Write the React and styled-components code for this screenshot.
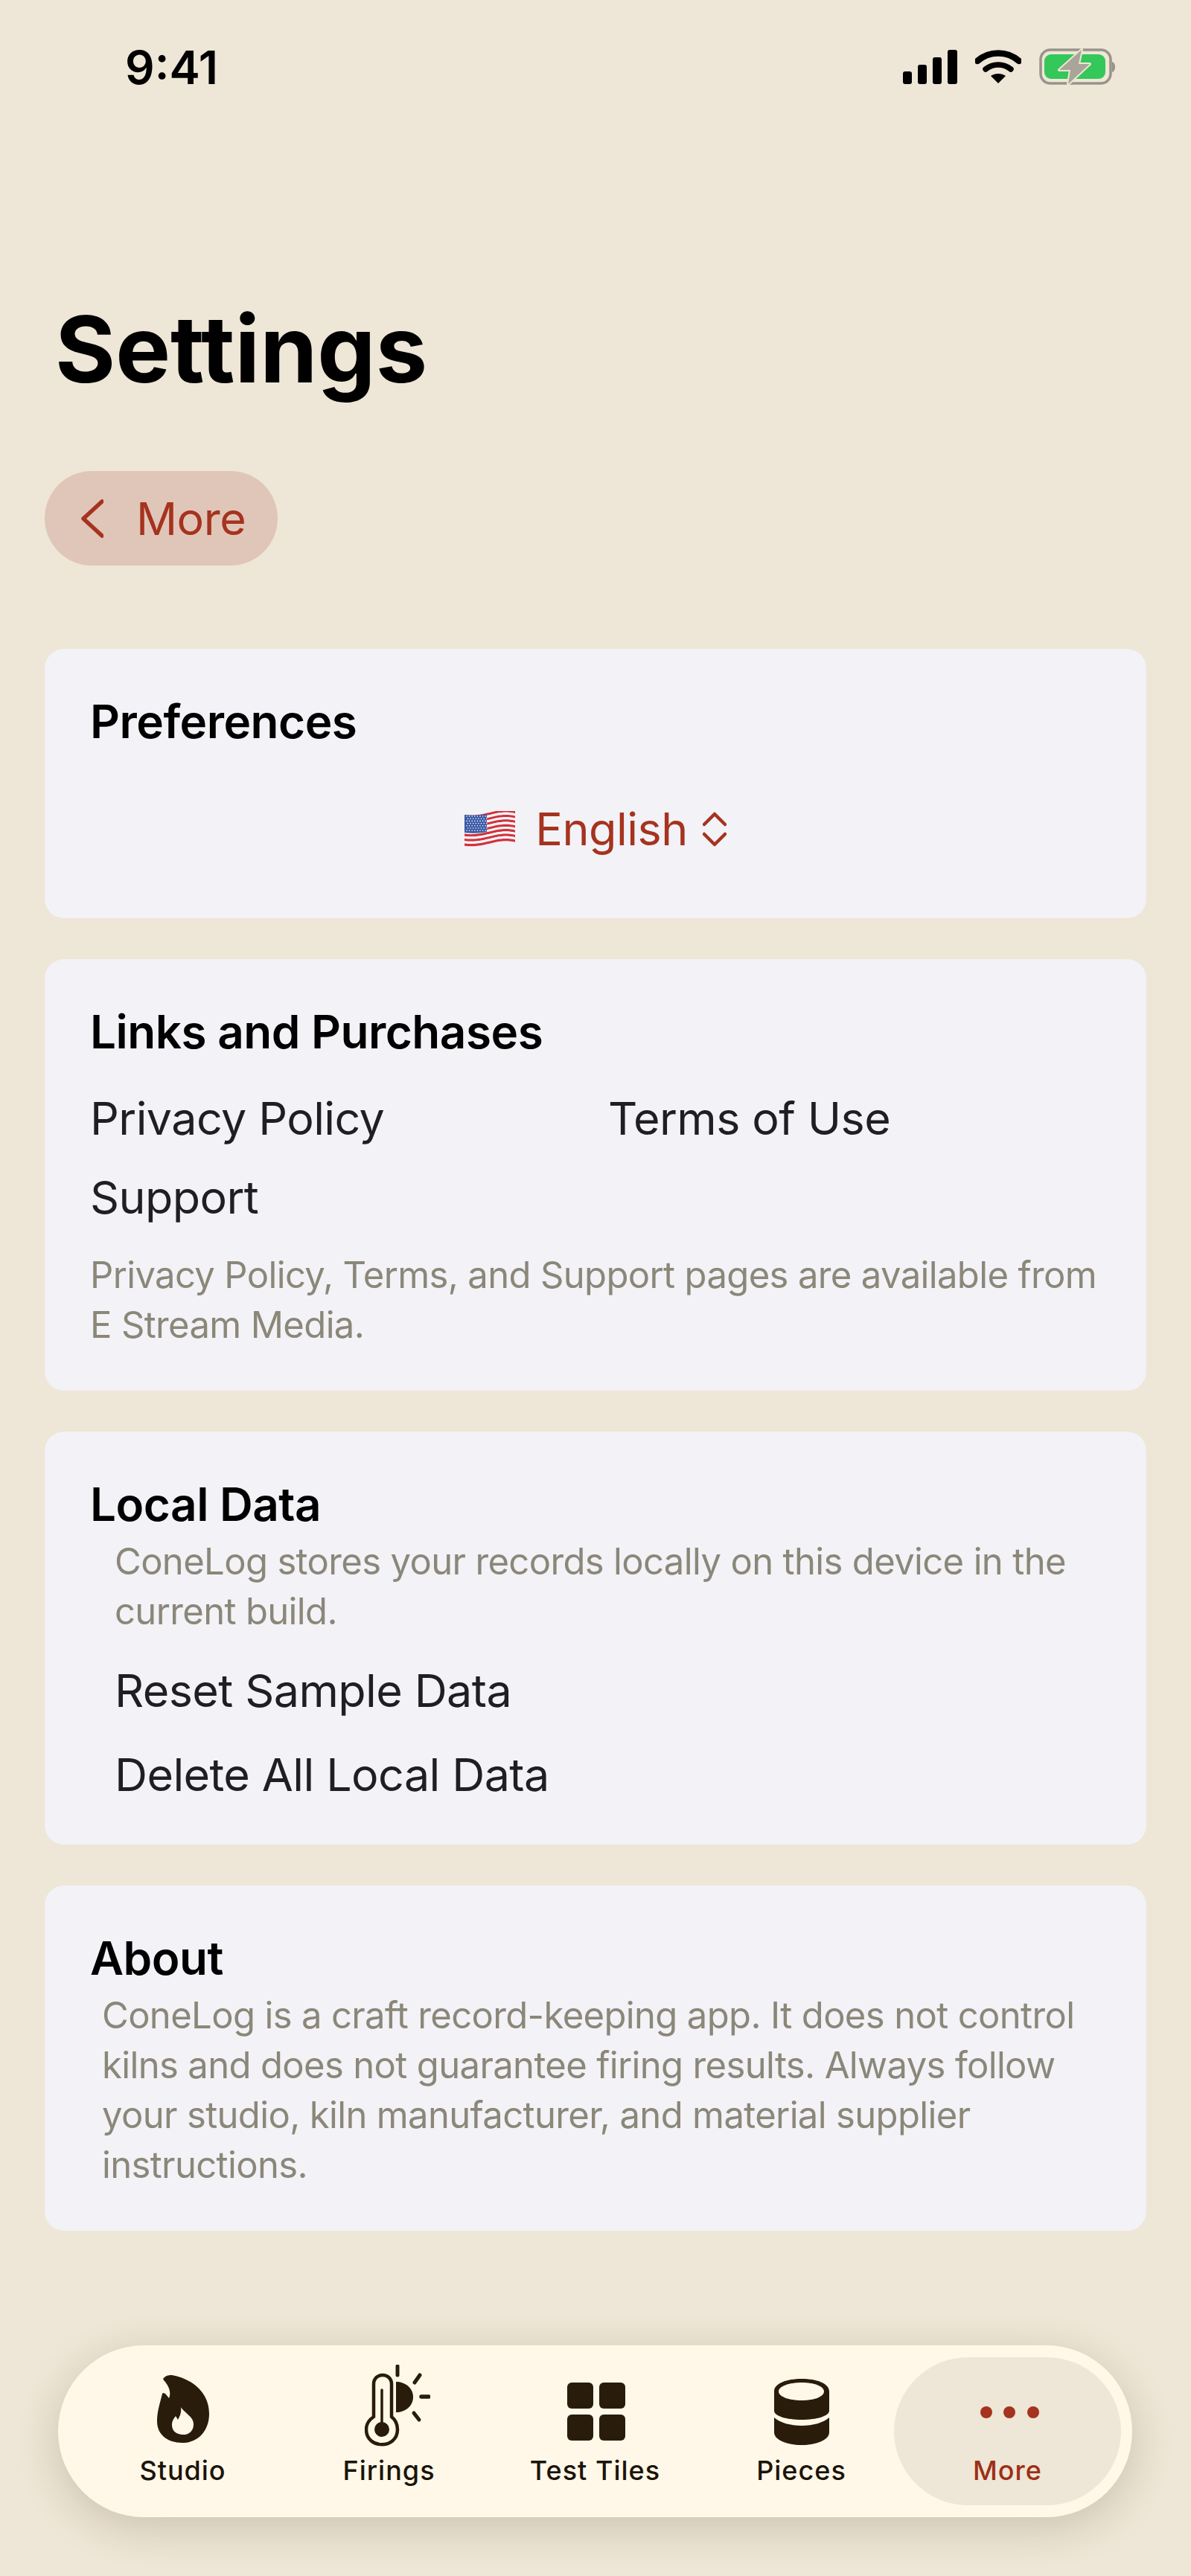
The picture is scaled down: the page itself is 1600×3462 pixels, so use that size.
import React from 'react';
import styled, { createGlobalStyle } from 'styled-components';

const GlobalStyle = createGlobalStyle`
  html, body {
    margin: 0;
    padding: 0;
    background: #eee6d6;
  }
  * {
    box-sizing: border-box;
  }
`;

const Page = styled.div`
  width: 1600px;
  height: 3462px;
  padding: 60px 60px 79px;
  display: flex;
  flex-direction: column;
  background: #eee6d6;
  font-family: Inter, "Liberation Sans", sans-serif;
  overflow: hidden;

  & > * {
    flex: none;
  }
`;

const StatusBar = styled.div`
  display: flex;
  align-items: center;
  justify-content: space-between;
  height: 62px;
  padding: 0 42px 0 108px;
`;

const Time = styled.span`
  font-size: 62px;
  line-height: 62px;
  font-weight: 600;
  color: #000;
`;

const StatusIcons = styled.div`
  display: flex;
  align-items: center;
  gap: 24px;
  margin-top: -2px;
`;

const Title = styled.h1`
  margin: 277px 0 0 14px;
  font-size: 124px;
  line-height: 140px;
  font-weight: 700;
  color: #000;
`;

const BackButton = styled.button`
  display: flex;
  align-items: center;
  gap: 44px;
  width: 313px;
  height: 127px;
  margin-top: 94px;
  padding: 0 0 0 49px;
  border: 0;
  border-radius: 64px;
  background: #e0c6b8;
  color: #a5331f;
  font: 400 61px/76px Inter, "Liberation Sans", sans-serif;
  letter-spacing: -0.5px;
`;

const Cards = styled.div`
  display: flex;
  flex-direction: column;
  gap: 55px;
  margin-top: 112px;
`;

const Card = styled.section`
  padding: 62px 61px ${(p) => p.$bottom}px;
  border-radius: 26px;
  background: #f2f2f7;
`;

const Heading = styled.h2`
  margin: 0;
  font-size: 62px;
  line-height: 72px;
  font-weight: 600;
  letter-spacing: -0.5px;
  color: #000;
`;

const LanguageRow = styled.div`
  display: flex;
  align-items: center;
  justify-content: center;
  height: 80px;
  margin-top: 68px;
  color: #a5331f;
  font-size: 61px;
  line-height: 76px;
  letter-spacing: -0.5px;
`;

const LanguageName = styled.span`
  margin: 0 20px 0 27px;
`;

const LinkGrid = styled.div`
  display: grid;
  grid-template-columns: 696px 1fr;
  row-gap: 30px;
  margin-top: 42px;
`;

const LinkText = styled.div`
  font-size: 61px;
  line-height: 76px;
  letter-spacing: -0.6px;
  color: #1f1f21;
`;

const Note = styled.p`
  margin: ${(p) => p.$top}px 0 0 ${(p) => p.$indent || 0}px;
  font-size: 49px;
  line-height: 67px;
  letter-spacing: -0.65px;
  white-space: nowrap;
  color: #8b8779;
`;

const ActionList = styled.div`
  display: flex;
  flex-direction: column;
  gap: 37px;
  margin: 35px 0 0 33px;
`;

const TabBar = styled.nav`
  display: flex;
  align-items: stretch;
  height: 231px;
  margin: auto 19px 0 18px;
  padding: 16px 16px 16px 29px;
  border-radius: 116px;
  background: #fff8e9;
  box-shadow: 0 14px 56px rgba(70, 55, 25, 0.2);
`;

const Tab = styled.div`
  flex: none;
  display: flex;
  flex-direction: column;
  align-items: center;
  width: ${(p) => (p.$active ? 305 : 277)}px;
  margin-left: ${(p) => (p.$active ? -14 : 0)}px;
  border-radius: 100px;
  background: ${(p) => (p.$active ? '#eee6d6' : 'transparent')};
  color: ${(p) => (p.$active ? '#9d2f16' : '#1c140a')};
`;

const TabIcon = styled.div`
  display: flex;
  align-items: flex-start;
  justify-content: center;
  height: 110px;
  margin: 10px 0 0 ${(p) => p.$left || 0}px;
  padding-top: ${(p) => p.$top}px;

  svg {
    display: block;
  }
`;

const TabLabel = styled.span`
  margin-top: 11px;
  font-size: 36px;
  line-height: 42px;
  font-weight: 500;
  letter-spacing: 1px;
`;

const SignalIcon = () => (
  <svg width="73" height="46" viewBox="0 0 73 46" fill="#000">
    <rect x="0" y="29" width="12" height="17" rx="3" />
    <rect x="20" y="20" width="12" height="26" rx="3" />
    <rect x="40" y="10" width="12" height="36" rx="3" />
    <rect x="60" y="0" width="13" height="46" rx="3" />
  </svg>
);

const WifiIcon = () => (
  <svg width="62" height="46" viewBox="0 0 62 46" fill="none" stroke="#000">
    <path d="M3 15 C19 1 43 1 59 15" strokeWidth="8.5" strokeLinecap="round" />
    <path d="M14 26 C24 18 38 18 48 26" strokeWidth="7.5" strokeLinecap="round" />
    <path d="M31 45 L21 35 C27 31 35 31 41 35 Z" fill="#000" stroke="none" />
  </svg>
);

const BatteryIcon = () => (
  <svg width="102" height="50" viewBox="0 0 102 50">
    <rect x="2" y="2" width="94" height="45" rx="13" fill="none" stroke="#98948a" strokeWidth="3.5" />
    <rect x="7" y="8" width="82" height="33" rx="9" fill="#34c759" />
    <path d="M98 18 C101 19 102 22 102 25 C102 28 101 31 98 32 Z" fill="#98948a" />
    <path
      d="M57 2 L27 29 H42 L39 48 L68 21 H53 Z"
      fill="#a9a598"
      stroke="#eee6d6"
      strokeWidth="4"
      strokeLinejoin="round"
      paintOrder="stroke"
    />
  </svg>
);

const BackChevron = () => (
  <svg width="30" height="52" viewBox="0 0 30 52" fill="none" stroke="#a5331f" strokeWidth="5.5" strokeLinecap="round" strokeLinejoin="round" style={{ flex: 'none' }}>
    <path d="M28 3 L3 26 L28 49" />
  </svg>
);

const UpDownChevron = () => (
  <svg width="32" height="47" viewBox="0 0 32 47" fill="none" stroke="#a5331f" strokeWidth="4.5" strokeLinecap="round" strokeLinejoin="round">
    <path d="M2 17 L16 3 L30 17" />
    <path d="M2 30 L16 44 L30 30" />
  </svg>
);

// waving stripe, y is the height of the stripe at the pole
const stripePath = (y, h) =>
  `M0 ${y + 4} C17 ${y + 6} 28 ${y + 2} 42 ${y - 1} C52 ${y - 3} 60 ${y - 3} 68 ${y - 1} V${y + h - 1} C60 ${y + h - 3} 52 ${y + h - 3} 42 ${y + h - 1} C28 ${y + h + 2} 17 ${y + h + 6} 0 ${y + h + 4} Z`;

const FlagIcon = () => {
  const stripes = Array.from({ length: 13 }, (_, i) => i);
  const stars = [];
  for (let row = 0; row < 7; row++) {
    for (let col = 0; col < 8; col++) {
      stars.push(<circle key={`${row}-${col}`} cx={3 + col * 3.6 + (row % 2) * 1.5} cy={7 + row * 3.2} r="0.8" fill="#fff" />);
    }
  }
  return (
    <svg width="68" height="49" viewBox="0 0 68 49">
      {stripes.map((i) => (
        <path key={i} d={stripePath(i * 3.2 + 1, 3.3)} fill={i % 2 === 0 ? '#d1323e' : '#f7f4f4'} />
      ))}
      <path d="M0 5 C10 6 20 6 30 4 V28 C20 30 10 30 0 29 Z" fill="#3a5aa6" />
      {stars}
    </svg>
  );
};

const FlameIcon = () => (
  <svg width="70" height="91" viewBox="0 0 70 91" fill="#2a1c0b" fillRule="evenodd">
    <path d="M10 3 C13 0 17 0 20 0 C48 5 70 24 70 52 C70 74 56 91 34 91 C14 91 0 80 0 62 C0 48 4 38 7 25 C8 23 10 24 12 26 L16 31 C20 22 14 12 9 7 C8 5 8 4 10 3 Z M32 43 C36 50 49 56 49 66 C49 75 43 80 35 80 C26 80 20 75 20 67 C20 61 23 58 25 55 L28 60 C31 55 33 49 32 43 Z" />
  </svg>
);

const ThermoSunIcon = () => (
  <svg width="88" height="110" viewBox="0 0 88 110" fill="none" stroke="#2a1c0b" strokeLinecap="round">
    <path d="M12 70 V26 C12 10 36 10 36 26 V70 C41 74 44 80 44 87 C44 114 2 114 2 87 C2 80 6 74 12 70 Z" strokeWidth="4.5" />
    <path d="M23 34 V80" strokeWidth="3.5" />
    <circle cx="23" cy="87" r="10" fill="#2a1c0b" stroke="none" />
    <path d="M42 23 C54 23 65 31 65 43.5 C65 56 54 64 42 64 Z" fill="#2a1c0b" stroke="none" />
    <path d="M44 2 V14" strokeWidth="5" />
    <path d="M74 14 L67 24" strokeWidth="5" />
    <path d="M76 43 H86" strokeWidth="5.5" />
    <path d="M66 65 L73 74" strokeWidth="5" />
  </svg>
);

const TilesIcon = () => (
  <svg width="78" height="78" viewBox="0 0 78 78" fill="#2a1c0b">
    <rect x="0" y="0" width="35" height="35" rx="6" />
    <rect x="43" y="0" width="35" height="35" rx="6" />
    <rect x="0" y="43" width="35" height="35" rx="6" />
    <rect x="43" y="43" width="35" height="35" rx="6" />
  </svg>
);

const CylinderIcon = () => (
  <svg width="74" height="89" viewBox="0 0 74 89" fill="#2a1c0b" fillRule="evenodd">
    <path d="M0 17 C0 6 17 0 37 0 C57 0 74 6 74 17 V43 C74 50 57 55 37 55 C17 55 0 50 0 43 Z M37 5 C20 5 6 10 6 17 C6 24 20 29 37 29 C54 29 67 24 67 17 C67 10 54 5 37 5 Z" />
    <path d="M0 52 C8 59 22 63 37 63 C52 63 66 59 74 52 V72 C74 82 57 89 37 89 C17 89 0 82 0 72 Z" />
  </svg>
);

const DotsIcon = () => (
  <svg width="79" height="16" viewBox="0 0 79 16" fill="#a5331f">
    <circle cx="8" cy="8" r="8" />
    <circle cx="39" cy="8" r="8" />
    <circle cx="71" cy="8" r="8" />
  </svg>
);

// left is a margin on a centred item, so it moves the icon by half its value
const tabs = [
  { label: 'Studio', icon: <FlameIcon />, top: 14 },
  { label: 'Firings', icon: <ThermoSunIcon />, top: 0, left: 23 },
  { label: 'Test Tiles', icon: <TilesIcon />, top: 24, left: 3 },
  { label: 'Pieces', icon: <CylinderIcon />, top: 19 },
  { label: 'More', icon: <DotsIcon />, top: 56, left: 6, active: true },
];

export default function App() {
  return (
    <Page>
      <GlobalStyle />
      <StatusBar>
        <Time>9:41</Time>
        <StatusIcons>
          <SignalIcon />
          <WifiIcon />
          <BatteryIcon />
        </StatusIcons>
      </StatusBar>

      <Title>Settings</Title>

      <BackButton>
        <BackChevron />
        More
      </BackButton>

      <Cards>
        <Card $bottom={80}>
          <Heading>Preferences</Heading>
          <LanguageRow>
            <FlagIcon />
            <LanguageName>English</LanguageName>
            <UpDownChevron />
          </LanguageRow>
        </Card>

        <Card $bottom={55}>
          <Heading>Links and Purchases</Heading>
          <LinkGrid>
            <LinkText>Privacy Policy</LinkText>
            <LinkText>Terms of Use</LinkText>
            <LinkText>Support</LinkText>
          </LinkGrid>
          <Note $top={33}>
            Privacy Policy, Terms, and Support pages are available from
            <br />
            E Stream Media.
          </Note>
        </Card>

        <Card $bottom={56}>
          <Heading>Local Data</Heading>
          <Note $top={7} $indent={33}>
            ConeLog stores your records locally on this device in the
            <br />
            current build.
          </Note>
          <ActionList>
            <LinkText>Reset Sample Data</LinkText>
            <LinkText>Delete All Local Data</LinkText>
          </ActionList>
        </Card>

        <Card $bottom={55}>
          <Heading>About</Heading>
          <Note $top={7} $indent={16}>
            ConeLog is a craft record-keeping app. It does not control
            <br />
            kilns and does not guarantee firing results. Always follow
            <br />
            your studio, kiln manufacturer, and material supplier
            <br />
            instructions.
          </Note>
        </Card>
      </Cards>

      <TabBar>
        {tabs.map((tab) => (
          <Tab key={tab.label} $active={tab.active}>
            <TabIcon $top={tab.top} $left={tab.left}>{tab.icon}</TabIcon>
            <TabLabel>{tab.label}</TabLabel>
          </Tab>
        ))}
      </TabBar>
    </Page>
  );
}
